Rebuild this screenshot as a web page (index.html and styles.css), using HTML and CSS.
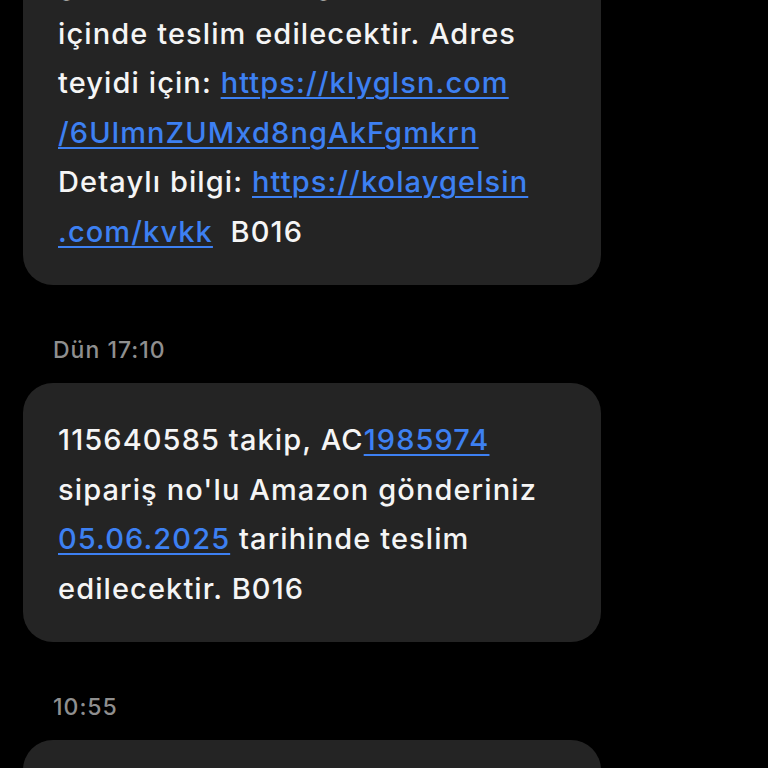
FILE: index.html
```html
<!DOCTYPE html>
<html lang="tr">

<head>
    <meta charset="UTF-8" />
    <meta name="viewport" content="width=device-width, initial-scale=1.0" />
    <title>Mesajlar</title>
    <link rel="stylesheet" href="styles.css">
</head>

<body>
    <main class="thread">
        <div class="bubble first">
            <p>gönderiniz 1-3 iş günü<br>
                içinde teslim edilecektir. Adres<br>
                teyidi için: <a href="#">https://klyglsn.com<br>/6UlmnZUMxd8ngAkFgmkrn</a><br>
                Detaylı bilgi: <a href="#">https://kolaygelsin<br>.com/kvkk</a>&nbsp; B016</p>
        </div>

        <div class="stamp">Dün 17:10</div>
        <div class="bubble">
            <p>115640585 takip, AC<a href="#">1985974</a><br>
                sipariş no'lu Amazon gönderiniz<br>
                <a href="#">05.06.2025</a> tarihinde teslim<br>
                edilecektir. B016</p>
        </div>

        <div class="stamp">10:55</div>
        <div class="bubble">
            <p>115640586 takip, AC1985975</p>
        </div>
    </main>
</body>

</html>
```

FILE: styles.css
```css
:root {
    --bg: #000000;
    --bubble: #242424;
    --text: #f5f5f5;
    --muted: #8f8f8f;
    --link: #3d80f2;
}

* {
    margin: 0;
    padding: 0;
    box-sizing: border-box;
}

html,
body {
    height: 100%;
    overflow: hidden;
}

body {
    background-color: var(--bg);
    color: var(--text);
    font-family: 'Inter', 'Noto Sans', sans-serif;
}

.thread {
    display: flex;
    flex-direction: column;
    padding-left: 23px;
}

.bubble {
    width: 578px;
    background-color: var(--bubble);
    border-radius: 30px;
    padding: 32px 30px 29px 35px;
}

.bubble.first {
    margin-top: -73px;
    border-radius: 0 0 30px 30px;
}

.bubble p {
    font-size: 29px;
    font-weight: 500;
    line-height: 49.5px;
    letter-spacing: 1.1px;
    white-space: nowrap;
}

.bubble a {
    color: var(--link);
    text-decoration: underline;
    text-decoration-thickness: 1.5px;
    text-underline-offset: 4px;
}

.stamp {
    margin: 50px 0 18px 30px;
    line-height: 30px;
    font-size: 23px;
    font-weight: 500;
    letter-spacing: 1px;
    color: var(--muted);
}
```
